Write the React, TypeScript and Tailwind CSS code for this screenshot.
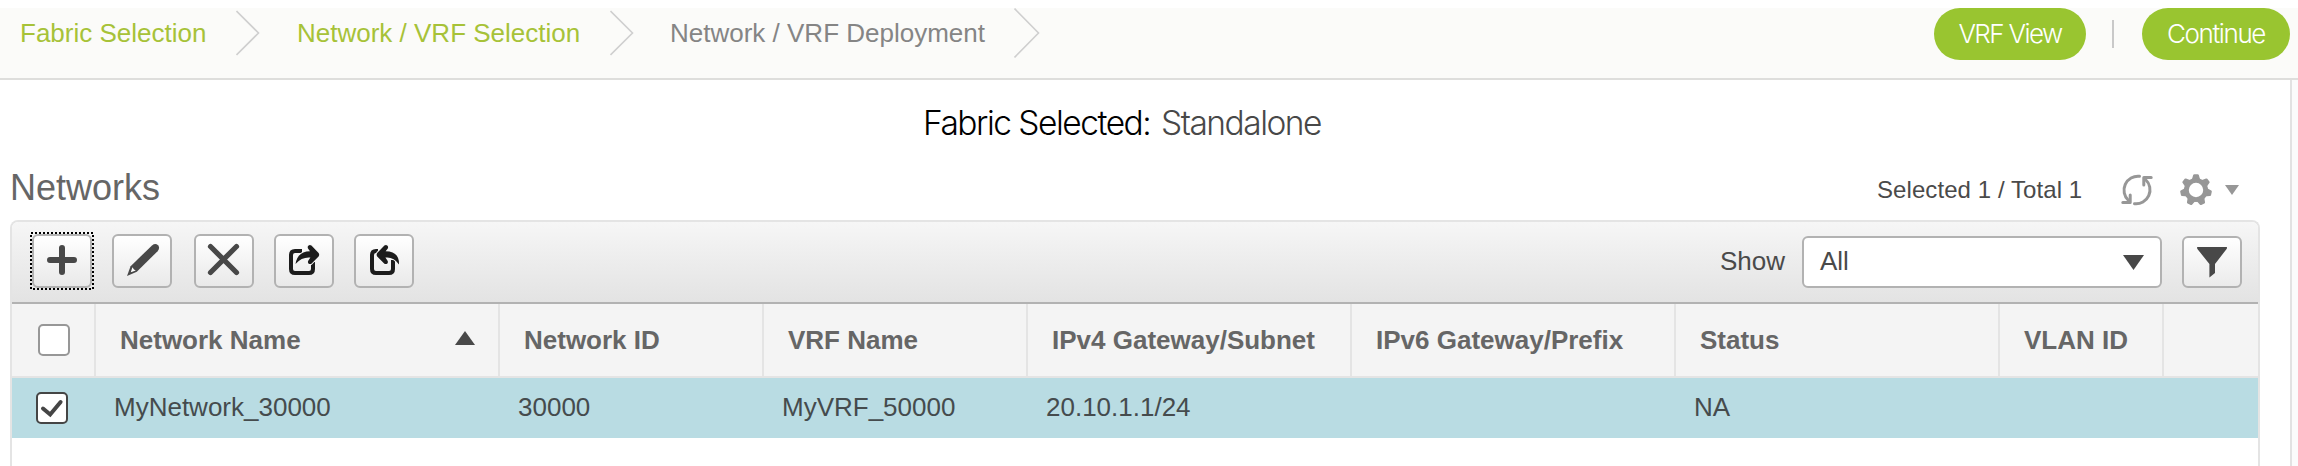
import type { ReactNode } from 'react';

const columns = [
  { name: 'Network Name', width: 'w-[404px]', value: 'MyNetwork_30000', sorted: true },
  { name: 'Network ID', width: 'w-[264px]', value: '30000' },
  { name: 'VRF Name', width: 'w-[264px]', value: 'MyVRF_50000' },
  { name: 'IPv4 Gateway/Subnet', width: 'w-[324px]', value: '20.10.1.1/24' },
  { name: 'IPv6 Gateway/Prefix', width: 'w-[324px]', value: '' },
  { name: 'Status', width: 'w-[324px]', value: 'NA' },
  { name: 'VLAN ID', width: 'w-[164px]', value: '' },
];

const gearTeeth = [0, 1, 2, 3, 4, 5, 6].map((index) => (index * 360) / 7);

function Chevron({ large = false }: { large?: boolean }) {
  return large ? (
    <svg width="26" height="50" viewBox="0 0 26 50" fill="none" stroke="#cfcfcf" strokeWidth="1.6">
      <path d="M0.5 0.5 L24.5 25 L0.5 49.5" />
    </svg>
  ) : (
    <svg width="24" height="50" viewBox="0 0 24 50" fill="none" stroke="#cfcfcf" strokeWidth="1.6">
      <path d="M0.5 3 L22.5 25 L0.5 47" />
    </svg>
  );
}

function ToolButton({ label, className = '', children }: { label: string; className?: string; children: ReactNode }) {
  return (
    <button
      aria-label={label}
      className={`h-[54px] w-[60px] shrink-0 rounded-[6px] border-2 border-[#b2b2b2] bg-gradient-to-b from-white to-[#e9e9e9] ${className}`}
    >
      <svg className="block h-full w-full" viewBox="2 2 56 50" fill="none">
        {children}
      </svg>
    </button>
  );
}

function Header() {
  return (
    <header className="mt-2 flex h-[72px] shrink-0 items-start justify-between border-b-2 border-[#dededc] bg-[#fbfbf9] pr-2 pl-5 text-[26px]">
      <nav className="flex h-[50px] items-center whitespace-nowrap">
        <span className="w-[216px] text-[#a7c238]">Fabric Selection</span>
        <Chevron />
        <span className="ml-[37px] w-[313px] text-[#a7c238]">Network / VRF Selection</span>
        <Chevron />
        <span className="ml-[36px] w-[344px] text-[#858585]">Network / VRF Deployment</span>
        <Chevron large />
      </nav>
      <div className="flex items-center font-['Inter','Liberation_Sans',sans-serif] font-[260] text-white">
        <button className="h-[52px] w-[152px] rounded-full bg-[#99c530] pb-0.5 tracking-[-1.6px]">VRF View</button>
        <span className="mr-[28px] ml-[26px] h-7 w-0.5 bg-[#c9c9c9]" />
        <button className="h-[52px] w-[148px] rounded-full bg-[#99c530] pb-0.5 tracking-[-1.4px]">Continue</button>
      </div>
    </header>
  );
}

function TitleRow() {
  return (
    <div className="flex h-[62px] items-center justify-between pr-[21px]">
      <h1 className="pb-[2px] text-[36px] leading-[50px] text-[#666]">Networks</h1>
      <div className="flex items-center pt-[2px] text-[24px] text-[#4a4a4a]">
        <span className="w-[244px] tracking-[0.08px]">Selected 1 / Total 1</span>
        <svg className="mr-[27px]" width="32" height="32" viewBox="0 0 32 32" fill="none" stroke="#979797" strokeWidth="3" strokeLinecap="round" strokeLinejoin="round">
          <path d="M18.5 2.3 A14 14 0 0 0 7.5 26.5" />
          <path d="M1.8 28.4 H9.2 V21" />
          <path d="M13.5 29.7 A14 14 0 0 0 24.5 5.5" />
          <path d="M30.2 3.6 H22.8 V11" />
        </svg>
        <svg className="mr-[13px]" width="32" height="32" viewBox="-16 -16 32 32" fill="#979797">
          {gearTeeth.map((angle) => (
            <path key={angle} d="M-4.6 -9 L-2.8 -15 Q-2.5 -15.8 -1.7 -15.8 H1.7 Q2.5 -15.8 2.8 -15 L4.6 -9 Z" transform={`rotate(${angle})`} />
          ))}
          <circle r="9.6" fill="none" stroke="#979797" strokeWidth="4.8" />
        </svg>
        <svg width="14" height="10" viewBox="0 0 14 10" fill="#979797">
          <path d="M0 0 H14 L7 10 Z" />
        </svg>
      </div>
    </div>
  );
}

function Toolbar() {
  return (
    <div className="flex h-[82px] items-center justify-between border-b-2 border-[#b2b2b2] bg-gradient-to-b from-[#f6f6f6] to-[#e3e3e3] pr-4 pl-5">
      <div className="flex items-start pb-[2px]">
        <div className="relative mr-5 flex">
          <ToolButton label="Add">
            <path d="M30 14 V38 M18 26 H42" stroke="#484848" strokeWidth="6" strokeLinecap="round" />
          </ToolButton>
          <svg className="absolute -top-[2px] -left-[2px]" width="64" height="58" fill="none" stroke="#000" strokeWidth="2" strokeDasharray="2 2">
            <rect x="1" y="1" width="62" height="56" />
          </svg>
        </div>
        <ToolButton label="Edit" className="mr-[22px]">
          <path d="M15 42 L18.6 32.2 L40 11.4 Q43.4 8.8 46 11.2 Q48.4 13.8 45.6 17.2 L24.8 37.8 Z" fill="#484848" />
          <path d="M20.4 33.2 L18.8 38.2 L23.8 36.4 L22 35.4 Z" fill="#fff" />
        </ToolButton>
        <ToolButton label="Delete" className="mr-5">
          <path d="M16.5 12.5 L42.5 38.5 M42.5 12.5 L16.5 38.5" stroke="#484848" strokeWidth="5.2" strokeLinecap="round" />
        </ToolButton>
        <ToolButton label="Export" className="mr-5">
          <path d="M28 17 H21 Q17 17 17 21 V35 Q17 39 21 39 H35 Q39 39 39 35 V28" stroke="#1c1c1c" strokeWidth="4" />
          <path
            d="M21.5 30 Q23.5 17.4 36 17.2 L34 14.4 Q33.2 12.4 34.6 11.4 Q36 10.6 37.4 11.6 L44.6 19 Q45.8 20.8 44.6 22.4 L37.4 29.8 Q35.8 30.6 34.4 29.4 Q33.4 28.2 34.4 26.4 L36.4 23.6 Q28 22.8 21.5 30 Z"
            className="[paint-order:stroke]"
            fill="#1c1c1c"
            stroke="#f6f6f6"
            strokeWidth="2"
          />
        </ToolButton>
        <ToolButton label="Import">
          <path d="M24 17 H22 Q18 17 18 21 V35 Q18 39 22 39 H35 Q39 39 39 35 V26" stroke="#1c1c1c" strokeWidth="4" />
          <path
            d="M45 30.4 Q45.4 17.4 31.6 17.2 L33.8 14.4 Q34.6 12.4 33.2 11.4 Q31.8 10.6 30.4 11.6 L23.2 19 Q22 20.8 23.2 22.4 L30.4 29.8 Q32 30.6 33.4 29.4 Q34.4 28.2 33.4 26.4 L31.4 23.6 Q39.6 22.6 45 30.4 Z"
            className="[paint-order:stroke]"
            fill="#1c1c1c"
            stroke="#f6f6f6"
            strokeWidth="2"
          />
        </ToolButton>
      </div>
      <div className="flex items-center text-[26px] text-[#4a4a4a]">
        <span className="w-[82px] pb-[2px]">Show</span>
        <div className="mr-5 flex h-[52px] w-[360px] items-center justify-between rounded-[6px] border-2 border-[#b2b2b2] bg-white pr-4 pl-4">
          <span className="pb-[2px]">All</span>
          <svg width="21" height="15" viewBox="0 0 21 15" fill="#484848">
            <path d="M0 0 H21 L10.5 15 Z" />
          </svg>
        </div>
        <button aria-label="Filter" className="h-[52px] w-[60px] rounded-[6px] border-2 border-[#b2b2b2] bg-gradient-to-b from-white to-[#ebebeb]">
          <svg className="block h-full w-full" viewBox="2 2 56 48" fill="#484848">
            <path d="M15.5 11 H44.5 Q45.6 11.6 44.6 13 L33 28 V37 L27.4 41.4 V28 L15.4 13 Q14.6 11.6 15.5 11 Z" />
          </svg>
        </button>
      </div>
    </div>
  );
}

function Grid() {
  return (
    <div className="text-[26px] whitespace-nowrap">
      <div className="flex h-[74px] border-b-2 border-[#e4e4e4] bg-[#f4f4f4] font-bold text-[#666]">
        <div className="flex w-[84px] items-center border-r-2 border-[#e4e4e4] pl-[26px]">
          <span className="size-8 rounded-[5px] border-2 border-[#979797] bg-white" />
        </div>
        {columns.map((column) => (
          <div key={column.name} className={`flex items-center justify-between border-r-2 border-[#e4e4e4] pr-[23px] pl-6 ${column.width}`}>
            <span className="pt-px">{column.name}</span>
            {column.sorted && (
              <svg className="mb-1" width="20" height="14" viewBox="0 0 20 14" fill="#484848">
                <path d="M10 0 L20 14 H0 Z" />
              </svg>
            )}
          </div>
        ))}
      </div>
      <div className="flex h-[60px] bg-[#b9dce3] text-[#454b4d]">
        <div className="flex w-[84px] items-center pl-6">
          <span className="flex size-8 items-center justify-center rounded-[5px] border-2 border-[#454545] bg-white">
            <svg width="28" height="28" viewBox="0 0 28 28" fill="none" stroke="#454545" strokeWidth="4" strokeLinecap="round">
              <path d="M5 14.5 L12.2 20.5 L22.6 8" />
            </svg>
          </span>
        </div>
        {columns.map((column) => (
          <div key={column.name} className={`flex items-center pb-px pl-[18px] ${column.width}`}>
            {column.value}
          </div>
        ))}
      </div>
    </div>
  );
}

export default function App() {
  return (
    <div className="flex h-[466px] w-[2298px] flex-col overflow-hidden bg-white font-['Liberation_Sans',Arial,sans-serif]">
      <Header />
      <div className="flex flex-1">
        <main className="flex w-[2290px] flex-col pr-[30px] pl-[10px]">
          <div className="flex h-[78px] items-center pt-2 pl-[913px] font-['Inter','Liberation_Sans',sans-serif] text-[33.5px] font-light tracking-[-1.5px]">
            <p className="text-black">
              Fabric Selected: <span className="ml-[3px] text-[#484848]">Standalone</span>
            </p>
          </div>
          <TitleRow />
          <section className="flex-1 overflow-hidden rounded-t-[8px] border-2 border-b-0 border-[#e4e4e4]">
            <Toolbar />
            <Grid />
          </section>
        </main>
        <aside className="flex-1 border-l-2 border-[#e2e2e2] bg-[#fbfbfb]" />
      </div>
    </div>
  );
}
